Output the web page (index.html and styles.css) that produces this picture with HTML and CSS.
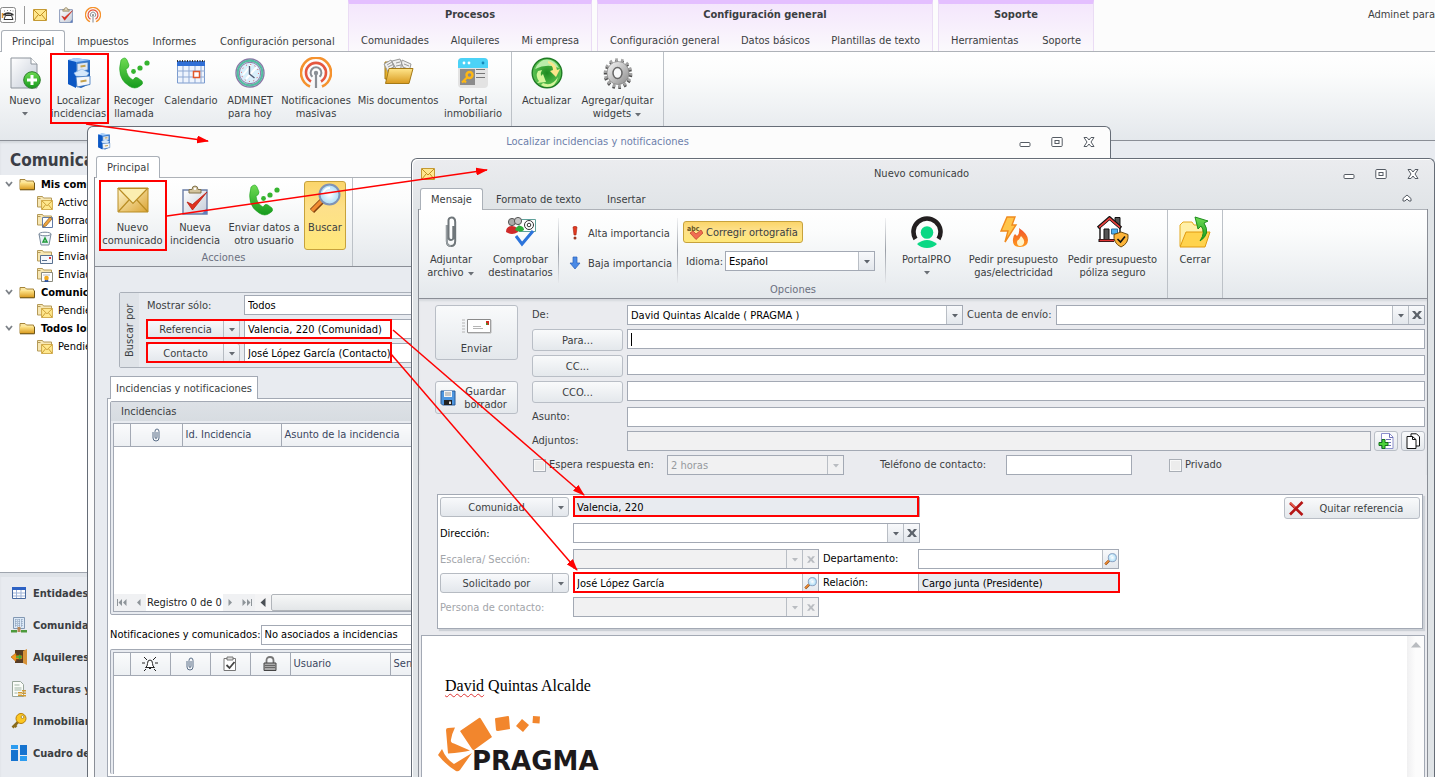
FILE: index.html
```html
<!DOCTYPE html>
<html lang="es">
<head>
<meta charset="utf-8">
<title>Adminet</title>
<link rel="stylesheet" href="styles.css">
</head>
<body>

<svg class="defs" aria-hidden="true">
  <defs>
    <linearGradient id="gold" x1="0" y1="0" x2="0" y2="1"><stop offset="0" stop-color="#ffe68c"/><stop offset="1" stop-color="#d99a1e"/></linearGradient>
    <linearGradient id="goldDiag" x1="0" y1="0" x2="1" y2="1"><stop offset="0" stop-color="#fff6cd"/><stop offset="1" stop-color="#dba536"/></linearGradient>
    <linearGradient id="blueDiag" x1="0" y1="0" x2="1" y2="1"><stop offset="0" stop-color="#5fa4f4"/><stop offset="1" stop-color="#0a4aa8"/></linearGradient>
    <linearGradient id="paper" x1="0" y1="0" x2="1" y2="1"><stop offset="0" stop-color="#ffffff"/><stop offset="1" stop-color="#c5ccd8"/></linearGradient>
    <linearGradient id="green" x1="0" y1="0" x2="0" y2="1"><stop offset="0" stop-color="#6edb52"/><stop offset="1" stop-color="#159a1d"/></linearGradient>
    <linearGradient id="steel" x1="0" y1="0" x2="1" y2="1"><stop offset="0" stop-color="#fafafa"/><stop offset="1" stop-color="#8a8a8a"/></linearGradient>
    <linearGradient id="flameGrad" x1="0" y1="0" x2="0" y2="1"><stop offset="0" stop-color="#f0522a"/><stop offset="1" stop-color="#ff9a1e"/></linearGradient>
    <radialGradient id="glass"><stop offset="0" stop-color="#ffffff"/><stop offset="1" stop-color="#a9dcf7"/></radialGradient>
    <radialGradient id="orb"><stop offset="0" stop-color="#1d8a1f"/><stop offset="1" stop-color="#5cc452"/></radialGradient>

    <symbol id="i-folder" viewBox="0 0 16 14">
      <path d="M1 2.500h5l1.500 1.500h7v8.500H1z" fill="#fbe6a0" stroke="#a5843a"/>
      <path d="M1 5.500h14v7H1z" fill="url(#gold)"/><path d="M1 12.800h14.500V5.500" fill="none" stroke="#6d5315"/>
    </symbol>
    <symbol id="i-minifolder" viewBox="0 0 16 15">
      <path d="M.500 1.500h5l1 1.500h8v9H.500z" fill="#f7e7b4" stroke="#b59a58"/>
      <path d="M.500 3.500h3" stroke="#b59a58"/>
    </symbol>
    <symbol id="i-mail" viewBox="0 0 32 26">
      <path d="M1 1h30v24H1z" fill="url(#goldDiag)" stroke="#b98d25"/>
      <path d="M1.500 24.500L12 13M30.500 24.500L20 13" fill="none" stroke="#b98d25" stroke-width="1.200"/>
      <path d="M1.500 1.500L16 16.500 30.500 1.500z" fill="#fbeeb0" stroke="#b98d25" stroke-width="1.200"/>
    </symbol>
    <symbol id="i-smallmail" viewBox="0 0 14 12">
      <path d="M.500.500h13v11H.500z" fill="#ffe88e" stroke="#c59a33"/>
      <path d="M1 1l6 6 6-6M1 11l4-5M13 11L9 6" fill="none" stroke="#c08f24"/>
    </symbol>
    <symbol id="i-cabinet" viewBox="0 0 26 32">
      <path d="M2 3l7-2 15 2v24l-9 4-13-4z" fill="url(#blueDiag)"/>
      <path d="M2 3l7-2 15 2-14 2z" fill="#a9cffb"/>
      <path d="M2 3l8 2v26l-8-4z" fill="#0c57c4"/>
      <path d="M11 6.500l11-1.500v8l-11 1.500z" fill="#dfe7f2" stroke="#3774bd" stroke-width=".800"/>
      <path d="M8 16l8-4 7 4-3 4-10-1z" fill="#d6e8fb" stroke="#8fb9ea" stroke-width=".600"/>
      <path d="M10 20l14-1v8.500L11 30z" fill="#f4f6fa" stroke="#3774bd" stroke-width=".800"/>
      <path d="M14.500 9.500l5-.700M14.500 24.500l6-1" stroke="#c4a24d" stroke-width="2"/>
    </symbol>
    <symbol id="i-clipboard" viewBox="0 0 26 30">
      <path d="M1 5h24v24H1z" fill="url(#paper)" stroke="#6a7da6" stroke-width="1.400"/>
      <path d="M20 29l5-6v6z" fill="#5f7fc0"/>
      <path d="M7 8V4.500h3q0-3.500 3-3.500t3 3.500h3V8z" fill="#d2c39d" stroke="#82734c"/>
      <circle cx="13" cy="3.800" r="1.200" fill="#fff"/>
      <path d="M5 17l5.500 8L25 7 10.500 19.500z" fill="#e0301e" stroke="#b81c10" stroke-width=".800"/>
    </symbol>
    <symbol id="i-phone" viewBox="0 0 32 32">
      <path d="M3 3q4-4 6 0l2 5q0 3-3 4 1 8 7 11 2-4 5-2l4 3q2 3-2 5-5 4-11 0Q-2 21 3 3z" fill="url(#green)" stroke="#21a524" stroke-width=".600"/>
      <g fill="#35b42f"><circle cx="15.500" cy="14.500" r="2.400"/><circle cx="22" cy="11" r="2.600"/><circle cx="29" cy="6" r="2.600"/></g>
    </symbol>
    <symbol id="i-antenna" viewBox="0 0 32 32">
      <g fill="none" stroke-width="2.600">
        <path d="M10 29.500A15 15 0 1 1 22 29.500" stroke="#f5922e"/>
        <path d="M11 24.500A10 10 0 1 1 21 24.500" stroke="#e5573f"/>
        <path d="M12.500 19.800A5.400 5.400 0 1 1 19.500 19.800" stroke="#8a8f95" stroke-width="2"/>
        <path d="M16 16v15" stroke="#8a8f95" stroke-width="2.200"/>
      </g>
      <circle cx="16" cy="16" r="2.200" fill="#8a8f95"/>
    </symbol>
    <symbol id="i-lens" viewBox="0 0 32 32">
      <path d="M3 28l10-10" stroke="#84420f" stroke-width="6"/>
      <path d="M3 27.500l10-10" stroke="#f08c32" stroke-width="3.600"/>
      <circle cx="20.500" cy="11.500" r="10" fill="url(#glass)" stroke="#7f93b5" stroke-width="2"/>
      <path d="M14 10q2-5 7-5" fill="none" stroke="#fff" stroke-width="2"/>
    </symbol>
    <symbol id="i-clip" viewBox="0 0 12 32">
      <path d="M1.800 9v16q0 5 4.200 5t4.200-5V6q0-4.500-3.600-4.500T3.500 6v15q0 3 2.500 3t2.300-3V10" fill="none" stroke="#6f767a" stroke-width="2"/>
      <path d="M1.800 9v16q0 5 4.200 5" fill="none" stroke="#c4cccf" stroke-width=".700"/>
    </symbol>
    <symbol id="i-tinyclip" viewBox="0 0 8 14">
      <path d="M1 4v6q0 3 3 3t3-3V3.500Q7 1 5 1T3 3.500V9q0 1.500 1 1.500T5 9V4" fill="none" stroke="#5b6f88"/>
    </symbol>
    <symbol id="i-min" viewBox="0 0 12 12"><rect x="1" y="6.500" width="10" height="4" rx="1" fill="#fff" stroke="#555b63"/></symbol>
    <symbol id="i-max" viewBox="0 0 12 12"><rect x=".800" y="1.500" width="10.400" height="9" rx="1" fill="#fff" stroke="#555b63"/><rect x="4" y="4.500" width="4" height="3" fill="none" stroke="#555b63"/></symbol>
    <symbol id="i-close" viewBox="0 0 12 12"><path d="M1 1.500h3l2 2.500 2-2.500h3L8 6l3 4.500H8L6 8l-2 2.500H1L4 6z" fill="#fff" stroke="#555b63"/></symbol>
    <symbol id="i-down" viewBox="0 0 8 5"><path d="M1 1h6L4 4.500z" fill="currentColor"/></symbol>
    <symbol id="i-x" viewBox="0 0 10 8"><path d="M0 0h3l2 2.500L7 0h3L6.700 4 10 8H7L5 5.500 3 8H0l3.300-4z" fill="currentColor"/></symbol>
    <symbol id="i-chev" viewBox="0 0 8 6"><path d="M1 1l3 3.500L7 1" fill="none" stroke="#7d8288" stroke-width="1.800"/></symbol>
  </defs>
</svg>

<main class="app">
  <header class="app-head">
    <div class="head-left">
      <div class="quick">
        <svg width="16" height="16" viewBox="0 0 16 16"><rect x=".500" y=".500" width="15" height="15" rx="2" fill="#fdfdfd" stroke="#888"/><path d="M3 8.500V7q5-3.500 10.500 0v1.500h-2.500V7.500H6v1z" fill="#333"/><path d="M5.500 8.500h6l1.500 4H4z" fill="#fff" stroke="#333"/><path d="M4 4h1M7 3.500h1M10 3.500h1M12.500 4h1" stroke="#888"/><path d="M2.500 6v5" stroke="#e5962c" stroke-width="1.500"/></svg>
        <i class="quick-sep"></i>
        <svg width="14" height="12"><use href="#i-smallmail"/></svg>
        <svg width="14" height="16"><use href="#i-clipboard"/></svg>
        <svg width="16" height="16"><use href="#i-antenna"/></svg>
      </div>
      <nav class="tabs tabs-app">
        <button class="tab on">Principal</button><button class="tab">Impuestos</button><button class="tab">Informes</button><button class="tab">Configuración personal</button>
      </nav>
    </div>
    <section class="context c-proc"><h2>Procesos</h2><nav class="tabs"><button class="tab">Comunidades</button><button class="tab">Alquileres</button><button class="tab">Mi empresa</button></nav></section>
    <section class="context c-conf"><h2>Configuración general</h2><nav class="tabs"><button class="tab">Configuración general</button><button class="tab">Datos básicos</button><button class="tab">Plantillas de texto</button></nav></section>
    <section class="context c-sop"><h2>Soporte</h2><nav class="tabs"><button class="tab">Herramientas</button><button class="tab">Soporte</button></nav></section>
    <span class="app-name">Adminet para</span>
  </header>

  <div class="ribbon ribbon-app">
    <div class="group app-a">
      <button class="big"><svg width="32" height="32" viewBox="0 0 32 32"><path d="M2 1h20l6 6v24H2z" fill="url(#paper)" stroke="#8d949c"/><path d="M22 1v6h6" fill="#fff" stroke="#8d949c"/><circle cx="23" cy="23" r="8.300" fill="url(#green)" stroke="#2b7d2a"/><path d="M23 18v10M18 23h10" stroke="#fff" stroke-width="3"/></svg><span>Nuevo</span><svg class="drop" width="8" height="5"><use href="#i-down"/></svg></button>
      <button class="big"><svg width="26" height="32"><use href="#i-cabinet"/></svg><span>Localizar<br>incidencias</span></button>
      <button class="big"><svg width="32" height="32"><use href="#i-phone"/></svg><span>Recoger<br>llamada</span></button>
      <button class="big"><svg width="32" height="32" viewBox="0 0 32 32"><path d="M2.500 5h27v21h-27z" fill="#eef4fd" stroke="#7a9bce"/><path d="M2 4h28v5H2z" fill="#2f6fd6"/><path d="M2 4h28" stroke="#333" stroke-width="2" stroke-dasharray="1 1.500"/><path d="M2 14h28M2 20h28M8 9v17M14 9v17M20 9v17M26 9v17" stroke="#8fa9d3"/><rect x="18.500" y="14.500" width="6" height="6" fill="#fff" stroke="#e2572b" stroke-width="1.500"/></svg><span>Calendario</span></button>
      <button class="big"><svg width="32" height="32" viewBox="0 0 32 32"><circle cx="16" cy="16" r="14" fill="#d9f0fb" stroke="#8c77a6" stroke-width="1.400"/><circle cx="16" cy="16" r="12.300" fill="none" stroke="#54bca0" stroke-width="2.200"/><circle cx="16" cy="16" r="10.700" fill="none" stroke="#8c77a6"/><path d="M9 18l8-10M12 22l11-12" stroke="#fff" stroke-width="2"/><circle cx="16" cy="16" r="8.500" fill="none" stroke="#df4652" stroke-dasharray="1 3.450"/><path d="M15.500 9v8l5 4" fill="none" stroke="#4d5870" stroke-width="1.400"/></svg><span>ADMINET<br>para hoy</span></button>
      <button class="big"><svg width="32" height="32"><use href="#i-antenna"/></svg><span>Notificaciones<br>masivas</span></button>
      <button class="big"><svg width="32" height="32" viewBox="0 0 32 32"><path d="M3 5h6l2 2v15H3z" fill="#e8b52c" stroke="#a57a17"/><path d="M2 7l7-4 7 12-8 4zM10 4l8-2 5 13-9 3zM20 3l9 4-3 12-8-2z" fill="#efefef" stroke="#999"/><path d="M5 8l5-3M6 10l6-3M8 12l5-3M14 6l4-1M14 9l5-1M22 7l5 2M21 10l5 2" stroke="#999"/><path d="M7 11.500h24l-4 15H3.500z" fill="url(#gold)" stroke="#a57a17"/></svg><span>Mis documentos</span></button>
      <button class="big"><svg width="32" height="32" viewBox="0 0 32 32"><rect x="1" y="1" width="30" height="30" rx="4" fill="#e3e3e3"/><path d="M1 11V5q0-4 4-4h22q4 0 4 4v6z" fill="#4bd2f7"/><circle cx="7" cy="6" r="1.400" fill="#fff"/><circle cx="12" cy="6" r="1.400" fill="#fff"/><circle cx="26" cy="6" r="1.400" fill="#1689b8"/><path d="M3 12h15v16H3z" fill="#8b8b8b"/><circle cx="12.500" cy="18" r="3" fill="none" stroke="#fdb714" stroke-width="2.400"/><path d="M10.500 20L5 25.500M7 23.500l2 2" stroke="#fdb714" stroke-width="2.200"/><path d="M19 12.500h9M19 16.500h9M19 20.500h9" stroke="#777"/></svg><span>Portal<br>inmobiliario</span></button>
    </div>
    <div class="group app-b">
      <button class="big"><svg width="32" height="32" viewBox="0 0 32 32"><circle cx="16" cy="16" r="14.800" fill="url(#orb)" stroke="#1f7a25" stroke-width="1.400"/><path d="M4 12Q8 2.500 16 2.500T28 11Q16 6 4 12z" fill="#b9ecaa"/><path d="M7 14q-3 5 1 10l-2 2 9-1-3-8-2 2q-1-3 1-6z" fill="#d4f59a"/><path d="M17 4q8 2 9 9l3-1-4 8-6-6 3-1q0-5-5-7z" fill="#fbe58a"/><path d="M12 26q9 4 15-6-2 10-11 10-3 0-6-2z" fill="#d4f59a"/></svg><span>Actualizar</span></button>
      <button class="big"><svg width="32" height="32" viewBox="0 0 32 32"><ellipse cx="16" cy="17.500" rx="12.500" ry="13" fill="none" stroke="#4f4f4f" stroke-width="3.500" stroke-dasharray="2.500 3.200"/><ellipse cx="16" cy="16" rx="12.500" ry="13" fill="none" stroke="#a3a3a3" stroke-width="3.500" stroke-dasharray="2.500 3.200"/><ellipse cx="16" cy="16" rx="11" ry="11.500" fill="url(#steel)" stroke="#777" stroke-width=".600"/><ellipse cx="15.500" cy="16" rx="4.500" ry="5.500" fill="#f8f9fa" stroke="#666" stroke-width="1.500"/></svg><span>Agregar/quitar<br>widgets <svg width="8" height="5"><use href="#i-down"/></svg></span></button>
    </div>
  </div>

  <aside class="side">
    <h1>Comunicados</h1>
    <ul class="tree">
      <li class="top"><svg width="8" height="6"><use href="#i-chev"/></svg><svg width="16" height="14"><use href="#i-folder"/></svg>Mis comunicados</li>
      <li><svg width="16" height="15"><use href="#i-minifolder"/><use href="#i-smallmail" x="4" y="5" width="12" height="10"/></svg>Activos</li>
      <li><svg width="16" height="15"><use href="#i-minifolder"/><path d="M5.500 4.500h10v10h-10z" fill="#fff" stroke="#607aa8"/><path d="M6 14l1-3 6-7 2 2-6 7z" fill="#f0a43a" stroke="#7c5b2f" stroke-width=".700"/></svg>Borradores</li>
      <li><svg width="16" height="15" viewBox="0 0 16 15"><path d="M2 3h12l-2 11H4z" fill="#eaf2f8" stroke="#76879a"/><ellipse cx="8" cy="3" rx="6" ry="1.800" fill="#fff" stroke="#76879a"/><path d="M8 7l2 4H6z" fill="none" stroke="#1f9b3a" stroke-width="1.500"/></svg>Eliminados</li>
      <li><svg width="16" height="15"><use href="#i-minifolder"/><path d="M3.500 6.500h12v8h-12z" fill="#f3f7fd" stroke="#58708f"/><path d="M5 11.500h5" stroke="#58708f"/><path d="M12 8h2v2h-2z" fill="#d33"/></svg>Enviados</li>
      <li><svg width="16" height="15"><use href="#i-minifolder"/><path d="M4.500 5.500h11v9h-11z" fill="#fff" stroke="#8a8a7d"/><path d="M6 8h7" stroke="#bbb"/><path d="M8 12l-.500 3h4l-.500-3" fill="#2e55a5"/><circle cx="9.500" cy="11" r="2.300" fill="#f0a91f"/></svg>Enviados certificados</li>
      <li class="top"><svg width="8" height="6"><use href="#i-chev"/></svg><svg width="16" height="14"><use href="#i-folder"/></svg>Comunicados web</li>
      <li><svg width="16" height="15"><use href="#i-minifolder"/><use href="#i-smallmail" x="4" y="5" width="12" height="10"/></svg>Pendientes</li>
      <li class="top"><svg width="8" height="6"><use href="#i-chev"/></svg><svg width="16" height="14"><use href="#i-folder"/></svg>Todos los comunicados</li>
      <li><svg width="16" height="15"><use href="#i-minifolder"/><use href="#i-smallmail" x="4" y="5" width="12" height="10"/></svg>Pendientes</li>
    </ul>
    <nav class="modules">
      <button><svg width="16" height="16" viewBox="0 0 16 16"><path d="M1.500 2.500h13v11h-13z" fill="#fff" stroke="#47699f"/><path d="M1 2h14v3H1z" fill="#2d62c4"/><path d="M2 8h12M2 11h12M5.500 5v8M10 5v8" stroke="#9db3d8"/></svg>Entidades</button>
      <button><svg width="16" height="16" viewBox="0 0 16 16"><path d="M2.500.500h11v11h-11z" fill="#dce9f7" stroke="#8298b3"/><path d="M4 3h8M4 5h8M4 7h8M4 9h8M5 2v8M8 2v8M11 2v8" stroke="#8298b3" stroke-dasharray="1 1"/><path d="M6.500 10h3v5h-3z" fill="#b9885a"/><path d="M0 13h6v2.500H0zM10 13h6v2.500h-6z" fill="#4d9a3c"/></svg>Comunidades</button>
      <button><svg width="16" height="16" viewBox="0 0 16 16"><path d="M4 1h11v13H4z" fill="#553c26"/><path d="M12 2l4-2v16l-4-2z" fill="#d7933b"/><path d="M0 8l5-4v2.500h6v3.500H5v2.500z" fill="#f49a22" stroke="#a45c0d" stroke-width=".600"/><path d="M5 8h5M8 6l2 2-2 2" fill="none" stroke="#36a938" stroke-width="1.500"/></svg>Alquileres</button>
      <button><svg width="16" height="16" viewBox="0 0 16 16"><path d="M1.500.500h8l3 3v12h-11z" fill="#fafcf9" stroke="#98a69b"/><path d="M3.500 4h5M3.500 7h7M3.500 9h7M3.500 12h3" stroke="#9fb4a4"/><path d="M7 11h4v1.500H7zM7 13.500h4V15H7zM11 9h4v1.500h-4zM11 11.500h4V13h-4zM11 14h4v1.500h-4z" fill="#d19a33"/></svg>Facturas y gastos</button>
      <button><svg width="16" height="16" viewBox="0 0 16 16"><path d="M8 8l-6.500 6.500M3.500 12l2 2" stroke="#8a6c1d" stroke-width="2.600"/><circle cx="10" cy="5.500" r="5" fill="#fcc722" stroke="#b98008"/><circle cx="11.500" cy="4" r="1.400" fill="#fff" stroke="#8a6c1d" stroke-width=".700"/></svg>Inmobiliaria</button>
      <button><svg width="16" height="16" viewBox="0 0 16 16"><path d="M0 0h7v4H0zM9 11h7v5H9z" fill="#2c9cf0"/><path d="M0 5h7v11H0zM9 0h7v10H9z" fill="#1673cf"/></svg>Cuadro de mando</button>
    </nav>
  </aside>
</main>

<section class="win win-find">
  <header class="bar">
    <svg class="bar-icon" width="14" height="17"><use href="#i-cabinet"/></svg>
    <h2>Localizar incidencias y notificaciones</h2>
    <div class="sys"><button aria-label="Minimizar"><svg width="12" height="12"><use href="#i-min"/></svg></button><button aria-label="Maximizar"><svg width="12" height="12"><use href="#i-max"/></svg></button><button aria-label="Cerrar ventana"><svg width="12" height="12"><use href="#i-close"/></svg></button></div>
  </header>
  <nav class="tabs"><button class="tab on">Principal</button></nav>
  <div class="client">
    <div class="ribbon ribbon-find">
      <div class="group captioned">
        <div class="find-a">
          <button class="big"><svg width="32" height="26"><use href="#i-mail"/></svg><span>Nuevo<br>comunicado</span></button>
          <button class="big"><svg width="28" height="30"><use href="#i-clipboard"/></svg><span>Nueva<br>incidencia</span></button>
          <button class="big"><svg width="32" height="32"><use href="#i-phone"/></svg><span>Enviar datos a<br>otro usuario</span></button>
          <button class="big pressed"><svg width="32" height="32"><use href="#i-lens"/></svg><span>Buscar</span></button>
        </div>
        <p>Acciones</p>
      </div>
    </div>
    <div class="find-body">
      <fieldset class="search">
        <legend class="vert">Buscar por</legend>
        <div class="search-rows">
          <label for="f-show">Mostrar sólo:</label><input id="f-show" class="box" value="Todos">
          <div class="split"><button>Referencia</button><button aria-label="Elegir referencia"><svg width="8" height="5"><use href="#i-down"/></svg></button></div><input class="box" aria-label="Referencia" value="Valencia, 220 (Comunidad)">
          <div class="split"><button>Contacto</button><button aria-label="Elegir contacto"><svg width="8" height="5"><use href="#i-down"/></svg></button></div><input class="box" aria-label="Contacto" value="José López García (Contacto)">
        </div>
      </fieldset>
      <button class="page-tab">Incidencias y notificaciones</button>
      <div class="page">
        <section class="panel">
          <h3>Incidencias</h3>
          <div class="grid grid-inc">
            <table>
              <colgroup><col class="w16"><col class="w52"><col class="w99"><col></colgroup>
              <thead><tr><th></th><th class="mid"><svg width="8" height="14"><use href="#i-tinyclip"/></svg></th><th>Id. Incidencia</th><th>Asunto de la incidencia</th></tr></thead>
            </table>
            <div class="pager">
              <button aria-label="Primero"><svg width="10" height="7" viewBox="0 0 10 7"><path d="M.500 0v7" stroke="#8e9499"/><path d="M5 0v7L1.500 3.500zM9.500 0v7L6 3.500z" fill="#8e9499"/></svg></button>
              <button aria-label="Anterior"><svg width="5" height="7" viewBox="0 0 5 7"><path d="M4.500 0v7L1 3.500z" fill="#8e9499"/></svg></button>
              <span>Registro 0 de 0</span>
              <button aria-label="Siguiente"><svg width="5" height="7" viewBox="0 0 5 7"><path d="M.500 0v7L4 3.500z" fill="#8e9499"/></svg></button>
              <button aria-label="Último"><svg width="10" height="7" viewBox="0 0 10 7"><path d="M9.500 0v7" stroke="#8e9499"/><path d="M5 0v7l3.500-3.500zM.500 0v7L4 3.500z" fill="#8e9499"/></svg></button>
              <i class="scroll-left"><svg width="6" height="9" viewBox="0 0 6 9"><path d="M5.500 0v9L.500 4.500z" fill="#4a4f55"/></svg></i><i class="thumb"></i>
            </div>
          </div>
        </section>
        <div class="notif"><label for="f-notif">Notificaciones y comunicados:</label><input id="f-notif" class="box" value="No asociados a incidencias"></div>
        <section class="panel grow">
          <div class="grid">
            <table>
              <colgroup><col class="w16"><col class="w40"><col class="w40"><col class="w40"><col class="w40"><col class="w100"><col></colgroup>
              <thead><tr><th></th>
                <th class="mid"><svg width="16" height="16" viewBox="0 0 16 16"><path d="M3.500 11.500h9q-2-1-2-4 0-3.500-2.500-3.500T5.500 7.500q0 3-2 4z" fill="#fff" stroke="#222"/><path d="M7 12.500h2" stroke="#222"/><path d="M2 1l3 3M14 1l-3 3M0 7h3M13 7h3M2 15l2-2M14 15l-2-2" stroke="#222"/></svg></th>
                <th class="mid"><svg width="8" height="14"><use href="#i-tinyclip"/></svg></th>
                <th class="mid"><svg width="14" height="16" viewBox="0 0 14 16"><path d="M1 2.500h11.500v12H1z" fill="#fff" stroke="#777"/><path d="M4 1h6v3H4z" fill="#ddd" stroke="#777"/><path d="M3.500 9l3 3 5-6" fill="none" stroke="#444" stroke-width="1.800"/></svg></th>
                <th class="mid"><svg width="14" height="15" viewBox="0 0 14 15"><path d="M3.500 8V4.500q0-3.500 3.500-3.500t3.500 3.500V8" fill="none" stroke="#777" stroke-width="1.800"/><path d="M1 7h12v7.500H1z" fill="#aaa" stroke="#444"/><path d="M2 9.500h10M2 11.500h10" stroke="#666"/></svg></th>
                <th>Usuario</th><th>Sentido</th></tr></thead>
            </table>
          </div>
        </section>
      </div>
    </div>
  </div>
</section>

<section class="win win-new">
  <header class="bar">
    <svg class="bar-icon" width="14" height="12"><use href="#i-smallmail"/></svg>
    <h2>Nuevo comunicado</h2>
    <div class="sys"><button aria-label="Minimizar"><svg width="12" height="12"><use href="#i-min"/></svg></button><button aria-label="Maximizar"><svg width="12" height="12"><use href="#i-max"/></svg></button><button aria-label="Cerrar ventana"><svg width="12" height="12"><use href="#i-close"/></svg></button></div>
  </header>
  <nav class="tabs"><button class="tab on">Mensaje</button><button class="tab">Formato de texto</button><button class="tab">Insertar</button>
    <button class="fold" aria-label="Contraer cinta"><svg width="10" height="8" viewBox="0 0 10 8"><path d="M1 4.500L5 1l4 3.500v2.500H7L5 5 3 7H1z" fill="#fff" stroke="#555b63"/></svg></button></nav>
  <div class="client">
    <div class="ribbon ribbon-new">
      <div class="group captioned new-main">
        <div class="new-a">
          <button class="big"><svg width="14" height="32"><use href="#i-clip"/></svg><span>Adjuntar<br>archivo <svg width="8" height="5"><use href="#i-down"/></svg></span></button>
          <button class="big"><svg width="32" height="32" viewBox="0 0 32 32"><path d="M14 3.500h16.500v12H14z" fill="#fff" stroke="#5fa09a"/><circle cx="7" cy="6" r="3.600" fill="#a9a9a9" stroke="#555"/><circle cx="13" cy="5" r="3.600" fill="#c4c4c4" stroke="#555"/><path d="M1 16q0-6 6-6t6 6q-6 4-12 0z" fill="#cf2a2a"/><path d="M10 14q2-5 6-4 3 1 3 4-4 3-9 0z" fill="#2fae3a"/><circle cx="24" cy="9" r="4.500" fill="none" stroke="#333"/><circle cx="24" cy="9" r="1.800" fill="none" stroke="#333"/><path d="M11 20l6 8 11-13" fill="none" stroke="#2d74db" stroke-width="3"/></svg><span>Comprobar<br>destinatarios</span></button>
          <div class="stack">
            <button class="small"><svg width="12" height="14" viewBox="0 0 12 14"><path d="M4 1q2-1.500 4 0l-1 8H5z" fill="#e13a20" stroke="#a42411" stroke-width=".600"/><circle cx="6" cy="12" r="1.500" fill="#9a3a22"/></svg>Alta importancia</button>
            <button class="small"><svg width="12" height="14" viewBox="0 0 12 14"><path d="M4 1h4v6h3l-5 6-5-6h3z" fill="#4a8ae6" stroke="#2a5fb8" stroke-width=".700"/></svg>Baja importancia</button>
          </div>
          <div class="stack stack-lang">
            <button class="small pressed"><svg width="16" height="16" viewBox="0 0 16 16"><text x="0" y="7" class="abc">abc</text><path d="M3 9l3-2 3 3 5-4 2 3-7 6.500z" fill="#f06c52" stroke="#b93d28" stroke-width=".700"/></svg>Corregir ortografia</button>
            <div class="lang"><label for="f-lang">Idioma:</label><div class="combo"><select id="f-lang"><option>Español</option></select><span class="cell"><svg width="8" height="5"><use href="#i-down"/></svg></span></div></div>
          </div>
          <div class="stack stack-pro">
            <button class="big"><svg width="32" height="32" viewBox="0 0 32 32"><path d="M4.500 23A13.500 13.500 0 1 1 27.500 23" fill="none" stroke="#231f20" stroke-width="4.600"/><circle cx="16" cy="16.500" r="6.300" fill="#0ad884"/><path d="M6 28q10-8 20 0-4 4-10 4T6 28z" fill="#0ad884"/></svg><span>PortalPRO</span><svg class="drop" width="8" height="5"><use href="#i-down"/></svg></button>
          </div>
          <button class="big"><svg width="32" height="32" viewBox="0 0 32 32"><path d="M9 1h8l-3 8h4L7 26l3-11H3z" fill="#ffc54a" stroke="#f08a1e" stroke-width="1.400"/><path d="M21 12q9 6 9 12 0 7-8 7t-7-8q0-3 2-5l2 2q3-3 2-8z" fill="url(#flameGrad)"/><path d="M23 20q4 4 3 7-1 3-4 3t-3-4q0-2 2-2.500z" fill="#fff3c9"/></svg><span>Pedir presupuesto<br>gas/electricidad</span></button>
          <button class="big"><svg width="32" height="32" viewBox="0 0 32 32"><path d="M18 1.500h5v8h-5z" fill="#555" stroke="#111"/><path d="M3 11l9.500-8L23 12v12H3z" fill="#fff" stroke="#111" stroke-width="1.400"/><path d="M1 12L12.500 2 24 12" fill="none" stroke="#111" stroke-width="3.600"/><path d="M2 11.300L12.500 2.300l10.500 9" fill="none" stroke="#e8413d" stroke-width="1.700"/><path d="M7 13h5v11H7z" fill="#555" stroke="#111"/><path d="M14.500 13h6v5h-6z" fill="#4fb0ee" stroke="#2b6f9e"/><path d="M1.500 24.500H17" stroke="#111" stroke-width="3"/><path d="M2.500 24.500H17" stroke="#e03434" stroke-width="1.500"/><path d="M24 16l7 2.500q1 9-7 12.500-8-4-7-12.500z" fill="#fdb539" stroke="#6b4a10"/><path d="M20.500 23l3 3 4.500-5.500" fill="none" stroke="#111" stroke-width="1.600"/></svg><span>Pedir presupuesto<br>póliza seguro</span></button>
        </div>
        <p>Opciones</p>
      </div>
      <div class="group new-close">
        <button class="big"><svg width="32" height="32" viewBox="0 0 32 32"><path d="M1 30V9l3-3h9l2 3h9v21z" fill="#fff0a8" stroke="#e4a91c"/><path d="M1 31l6-15h24l-5 15z" fill="#ffd34d" stroke="#e09a10"/><path d="M21 25q6-9 1-15l-3 3-3-12 13 4-4 2q7 11-4 18z" fill="url(#green)" stroke="#1e8c1c"/></svg><span>Cerrar</span></button>
      </div>
    </div>

    <form class="compose">
      <div class="actions">
        <button type="button" class="push send"><svg width="30" height="16" viewBox="0 0 30 16"><path d="M5.500 1.500h23v13h-23z" fill="#fff" stroke="#8a8a8a"/><path d="M6 15h23V2" fill="none" stroke="#b5b5b5"/><path d="M0 2h3M0 5h3M0 8h3M0 11h3M0 14h3M11 8.500h8M11 10.500h10" stroke="#b5b5b5"/><path d="M24 3h3v4h-3z" fill="#d32b1e"/><path d="M24 5h1.500v2H24z" fill="#3c9a2e"/></svg>Enviar</button>
        <button type="button" class="push save"><svg width="16" height="16" viewBox="0 0 16 16"><path d="M1 1h14v14H2.500L1 13.500z" fill="#4d96e0" stroke="#2a5b97"/><path d="M4 1h8v6H4z" fill="#f5f5f5"/><path d="M5 3h6M5 5h6" stroke="#999"/><path d="M4 10h8v5H4z" fill="#222"/><path d="M9 11.500h2V14H9z" fill="#ddd"/></svg><span>Guardar<br>borrador</span></button>
      </div>
      <div class="fields">
        <label for="m-from">De:</label>
        <div class="line"><div class="combo from"><select id="m-from"><option>David Quintas Alcalde ( PRAGMA )</option></select><span class="cell"><svg width="8" height="5"><use href="#i-down"/></svg></span></div><label for="m-acc">Cuenta de envío:</label><div class="combo fill"><select id="m-acc"><option></option></select><span class="cell"><svg width="8" height="5"><use href="#i-down"/></svg></span><button type="button" class="cell" aria-label="Borrar cuenta"><svg width="10" height="8"><use href="#i-x"/></svg></button></div></div>
        <button type="button" class="push">Para...</button><div class="box caret"><input aria-label="Para"></div>
        <button type="button" class="push">CC...</button><input class="box" aria-label="CC">
        <button type="button" class="push">CCO...</button><input class="box" aria-label="CCO">
        <label for="m-sub">Asunto:</label><input id="m-sub" class="box">
        <label for="m-att">Adjuntos:</label>
        <div class="line line-att"><input id="m-att" class="box off fill" readonly><button type="button" class="push tool" aria-label="Añadir adjunto"><svg width="17" height="16" viewBox="0 0 17 16"><path d="M3.500.500h8l3.500 3.500v11.500H3.500z" fill="#fff" stroke="#8d90cc"/><path d="M11.500.500v4H15M8 6.500h5M9 9.500h4M10 12.500h3" fill="none" stroke="#6f72b8"/><path d="M4 6.500h3v3h3v3H7v3H4v-3H1v-3h3z" fill="#4bd23a" stroke="#12711a"/></svg></button><button type="button" class="push tool" aria-label="Copiar"><svg width="15" height="16" viewBox="0 0 15 16"><path d="M5 .800h5.500l3 3V13H5z" fill="#fff" stroke="#111"/><path d="M1 3.500h5.500L10 6.500v9H1z" fill="#fff" stroke="#111"/><path d="M6.500 3.500v3H10" fill="none" stroke="#111"/></svg></button></div>
        <div class="line wide"><label class="check"><input type="checkbox">Espera respuesta en:</label><div class="combo off hours"><select aria-label="Horas" disabled><option>2 horas</option></select><span class="cell"><svg width="8" height="5"><use href="#i-down"/></svg></span></div><label for="m-tel" class="tel">Teléfono de contacto:</label><input id="m-tel" class="box phone"><label class="check"><input type="checkbox">Privado</label></div>
      </div>
    </form>

    <section class="ref">
      <div class="split"><button>Comunidad</button><button aria-label="Elegir comunidad"><svg width="8" height="5"><use href="#i-down"/></svg></button></div>
      <div class="line"><input class="box gray span3" aria-label="Comunidad" value="Valencia, 220" readonly><button class="push remove"><svg width="15" height="15" viewBox="0 0 15 15"><path d="M1 2l12.500 12M13.500 1L1 13.500" stroke="#b51616" stroke-width="2.600"/><path d="M1 1.500l5 5" stroke="#e8604f" stroke-width="1.400"/></svg><span>Quitar referencia</span></button></div>
      <label for="r-dir">Dirección:</label>
      <div class="line"><div class="combo span3"><select id="r-dir"><option></option></select><span class="cell"><svg width="8" height="5"><use href="#i-down"/></svg></span><button class="cell" aria-label="Borrar dirección"><svg width="10" height="8"><use href="#i-x"/></svg></button></div></div>
      <label for="r-esc" class="dim">Escalera/ Sección:</label>
      <div class="line"><div class="combo off half"><select id="r-esc" disabled><option></option></select><span class="cell"><svg width="8" height="5"><use href="#i-down"/></svg></span><button class="cell" aria-label="Borrar escalera" disabled><svg width="8" height="7"><use href="#i-x"/></svg></button></div><label for="r-dep" class="mini">Departamento:</label><div class="combo dep"><input id="r-dep"><button class="cell" aria-label="Buscar departamento"><svg width="13" height="13"><use href="#i-lens"/></svg></button></div></div>
      <div class="split"><button>Solicitado por</button><button aria-label="Elegir solicitante"><svg width="8" height="5"><use href="#i-down"/></svg></button></div>
      <div class="line"><div class="combo half"><input aria-label="Solicitado por" value="José López García"><button class="cell" aria-label="Buscar persona"><svg width="13" height="13"><use href="#i-lens"/></svg></button></div><label for="r-rel" class="mini">Relación:</label><input id="r-rel" class="box gray dep" value="Cargo junta (Presidente)" readonly></div>
      <label for="r-per" class="dim">Persona de contacto:</label>
      <div class="line"><div class="combo off half"><select id="r-per" disabled><option></option></select><span class="cell"><svg width="8" height="5"><use href="#i-down"/></svg></span><button class="cell" aria-label="Borrar persona" disabled><svg width="8" height="7"><use href="#i-x"/></svg></button></div></div>
    </section>

    <article class="editor">
      <div class="paper">
        <p><span class="typo">David</span> Quintas Alcalde</p>
        <svg class="logo" width="164" height="60" viewBox="0 0 164 60">
          <g fill="#f2862d">
            <path d="M22 16L41 3q1-1 2 1l11 18-18 13q-1 .500-2-1z"/><path d="M57 4q0-1 1-1l12-2q1 0 1 1l1 12-12 2q-2 0-2-1z"/><path d="M78 11l6-7 7 6-6 7z"/><path d="M95 1l7 .500-.500 7-7-.500z"/>
            <path d="M8 15q0-2 2-2l7-.500q-3 6-4 12-1 3 3 4l16 7q-8 2-22 3z"/><path d="M4 34q4 10 12 15l18-11-12 17q-2 2-4 1Q8 50 0 40z"/>
          </g>
          <text x="34" y="55" class="logo-text">PRAGMA</text>
        </svg>
      </div>
      <i class="vscroll"><svg width="10" height="6" viewBox="0 0 10 6"><path d="M5 0l5 5.500H0z" fill="#b9bcc0"/></svg></i>
    </article>
  </div>
</section>

<svg class="notes" viewBox="0 0 1435 777" aria-hidden="true">
  <defs><marker id="tip" markerUnits="userSpaceOnUse" markerWidth="12" markerHeight="8" refX="11" refY="4" orient="auto"><path d="M0 0l12 4-12 4z" fill="red"/></marker></defs>
  <g fill="none" stroke="red" stroke-width="2">
    <rect x="51" y="54" width="57" height="69"/>
    <rect x="100" y="181" width="66" height="69"/>
    <rect x="147" y="320" width="244" height="18"/>
    <rect x="147" y="343" width="244" height="19"/>
    <rect x="574" y="497" width="344" height="19"/>
    <rect x="574" y="573" width="545" height="19"/>
  </g>
  <g stroke="red" stroke-width="1.500">
    <path d="M86 124L208 141" marker-end="url(#tip)"/><path d="M167 216L487 170" marker-end="url(#tip)"/><path d="M393 330L584 495" marker-end="url(#tip)"/><path d="M391 354L577 570" marker-end="url(#tip)"/>
  </g>
</svg>
</body>
</html>
```

FILE: styles.css
```css
* { box-sizing: border-box; }
html, body { height: 100%; }
body, button, input, select {
  font: 11px/13px "DejaVu Sans Condensed", "Noto Sans", sans-serif;
  color: #3b3e42;
}
body { margin: 0; overflow: hidden; background: #e8ebf0; position: relative; }
h1, h2, h3, p, ul, fieldset, legend { margin: 0; padding: 0; border: 0; }
button, input, select { margin: 0; padding: 0; border: 0; background: none; border-radius: 0; }
button { white-space: nowrap; }
input, select { color: #000; outline: 0; opacity: 1; }
select { appearance: none; }
svg { flex: none; }
label { white-space: nowrap; }
.defs { position: absolute; width: 0; height: 0; }

/* tabs and ribbons */
.tabs { display: flex; }
.tab { height: 21px; padding: 0 12px; border: 1px solid transparent; border-bottom: 0; }
.tab.on { background: #fff; border-color: #aab0b8; border-radius: 3px 3px 0 0; height: 22px; margin-bottom: -1px; position: relative; z-index: 1; }
.ribbon {
  display: flex;
  border-top: 1px solid #aeb2b8;
  border-bottom: 1px solid #8a8e96;
  background: linear-gradient(#fff, #fbfcfc 25%, #e4e8ec);
}
.group { border-right: 1px solid #bcc1c7; }
.big { display: flex; flex-direction: column; align-items: center; padding-top: 5px; min-width: 0; }
.big > span { margin-top: 5px; }
.big .drop, .big span svg { color: #6a6f75; }
.big .drop { margin-top: 4px; }
.big > svg[height="26"] { margin: 3px 0; }
.big > svg[height="30"] { margin: 1px 0; }
.pressed { background: linear-gradient(#fbd56a, #fde08a 40%, #ffe87a); border: 1px solid #c7a23c; border-radius: 3px; }

/* main window */
.app { height: 100%; display: flex; flex-direction: column; }
.app-head { display: flex; height: 51px; background: #fcfcfc; }
.head-left { width: 348px; display: flex; flex-direction: column; justify-content: space-between; }
.quick { display: flex; align-items: center; height: 30px; gap: 12px; }
.quick-sep { width: 1px; height: 18px; background: #9a9a9a; margin: 0 -4px; }
.tabs-app { padding-left: 1px; }
.tabs-app .tab { padding: 0 11px; }
.tabs-app .tab.on { padding: 0 10px; }
.context {
  border: 1px solid #eadcf4; border-top: 4px solid #e4bfff; border-bottom: 0; margin-right: 5px;
  background: linear-gradient(#f4e6fc, #fbf9fc);
  display: flex; flex-direction: column; justify-content: space-between;
}
.context h2 { text-align: center; font-size: 11px; padding-top: 4px; }
.context .tabs { justify-content: space-between; padding: 0 12px; }
.context .tab { padding: 0; border: 0; }
.c-proc { width: 244px; }
.c-conf { width: 336px; }
.c-sop { width: 156px; }
.app-name { margin-left: auto; padding-top: 8px; white-space: nowrap; }
.ribbon-app { height: 90px; }
.app-a { display: grid; grid-template-columns: 50px 57px 54px 60px 58px 74px 90px 60px; padding-right: 8px; }
.app-b { display: grid; grid-template-columns: 67px 75px; padding: 0 8px 0 1px; }

.side { width: 200px; flex: 1; min-height: 0; display: flex; flex-direction: column; background: #e8ebf0; box-shadow: inset 0 2px 2px #d4d8dd; }
.side h1 { font: bold 17px/20px "DejaVu Sans Condensed", "Noto Sans", sans-serif; padding: 9px 0 5px 10px; color: #3b3e46; }
.tree { flex: 1; list-style: none; background: #fff; padding-left: 5px; color: #000; }
.tree li { display: flex; align-items: center; height: 18px; gap: 5px; padding-left: 32px; white-space: nowrap; }
.tree .top { padding-left: 0; font-weight: bold; gap: 6px; }
.modules { display: flex; flex-direction: column; border-top: 4px solid #dfe3e8; outline: 1px solid #9fa5ae; padding-bottom: 8px; }
.modules button { display: flex; align-items: center; gap: 6px; height: 32px; padding-left: 11px; font-weight: bold; }

/* child windows */
.win { position: absolute; bottom: 0; border: 1px solid #666d77; border-bottom: 0; border-radius: 6px 6px 0 0; display: flex; flex-direction: column; overflow: hidden; }
.win-find { left: 87px; top: 126px; width: 1024px; background: #fcfcfc; }
.win-new { left: 411px; top: 158px; right: 0; background: linear-gradient(#ebecef, #e0e4e7 50px); box-shadow: inset 1px 1px #fff; }
.bar { display: flex; align-items: center; height: 29px; padding: 0 15px 0 9px; }
.bar h2 { flex: 1; text-align: center; font-size: 11px; font-weight: normal; }
.win-find .bar h2 { color: #6d7fab; }
.sys { display: flex; gap: 20px; }
.bar-icon { margin-right: 65px; }
.sys button, .fold { display: flex; }
.win .tabs { padding-left: 8px; }
.win .tab { padding: 0 10px; }
.win-new .tabs .tab + .tab { padding: 0 12px; }
.fold { margin: 6px 22px 0 auto; }
.client { flex: 1; min-height: 0; display: flex; flex-direction: column; margin: 0 6px; border-left: 1px solid #8a8e96; border-right: 1px solid #8a8e96; background: #eaebef; }
.captioned { display: flex; flex-direction: column; justify-content: space-between; }
.captioned p { text-align: center; color: #6b7080; padding-bottom: 2px; }
.ribbon-find { height: 90px; }
.find-a { display: grid; grid-template-columns: 67px 58px 80px 42px; padding: 3px 6px 0 4px; height: 73px; }
.find-a .big { height: 69px; padding-top: 3px; }
.find-a .pressed { padding-top: 1px; }
.find-a .pressed span { margin-top: 6px; }

/* find window */
.find-body { flex: 1; display: flex; flex-direction: column; align-items: flex-start; padding: 25px 0 0 12px; background: #e8ebf0; }
.search { display: flex; align-self: stretch; margin: 0 10px 8px 12px; border: 1px solid #aab0b9; border-radius: 2px; height: 76px; }
.vert { float: left; writing-mode: vertical-rl; transform: rotate(180deg); text-align: center; width: 19px; height: 74px; line-height: 19px; background: #dfe3e8; }
.search-rows { flex: 1; display: grid; grid-template-columns: 93px 1fr; grid-auto-rows: 20px; gap: 4px; padding: 2px 8px 0 8px; align-items: center; }
.box { height: 20px; border: 1px solid #a3a9b4; background: #fff; padding: 0 3px; min-width: 0; width: 100%; }
.split { display: flex; height: 20px; border: 1px solid #b6bbc2; border-radius: 3px; background: linear-gradient(#f8f9fb, #e3e7ec); }
.split button:first-child { flex: 1; }
.split button + button { width: 16px; border-left: 1px solid #b6bbc2; display: flex; align-items: center; justify-content: center; color: #666b72; }
.page-tab { margin-left: 3px; height: 23px; padding: 0 4px; min-width: 148px; background: #fff; border: 1px solid #a3a9b4; border-bottom: 0; position: relative; z-index: 1; }
.page { flex: 1; align-self: stretch; display: flex; flex-direction: column; margin-top: -1px; border: 1px solid #a3a9b4; background: #fff; padding: 2px; }
.panel { border: 1px solid #a3a9b4; border-radius: 2px; background: #e8ebf0; padding: 2px; }
.panel.grow { flex: 1; border-bottom: 0; padding-bottom: 0; display: flex; }
.panel.grow .grid { flex: 1; border-bottom: 0; }
.panel h3 { font-size: 11px; font-weight: normal; margin: -2px -2px 2px; padding: 0 10px; line-height: 19px; background: linear-gradient(#dde1e6, #d7dce1); }
.grid { border: 1px solid #a3a9b4; background: #fff; display: flex; flex-direction: column; justify-content: space-between; }
.grid-inc { height: 189px; }
table { border-collapse: collapse; table-layout: fixed; width: 100%; }
th { height: 22px; padding: 0 3px; text-align: left; font-weight: normal; border-right: 1px solid #a3a9b4; border-bottom: 1px solid #a3a9b4; background: linear-gradient(#fafbfc, #edf0f3); color: #3a4560; }
th.mid { text-align: center; line-height: 0; }
th svg { vertical-align: middle; }
.w16 { width: 16px; } .w40 { width: 40px; } .w52 { width: 52px; } .w99 { width: 99px; } .w100 { width: 100px; }
.pager { display: flex; height: 17px; color: #222; }
.pager button { width: 16px; background: #f0f1f3; display: flex; align-items: center; justify-content: center; }
.pager span { line-height: 17px; padding: 0 1px; white-space: nowrap; }
.scroll-left { width: 16px; display: flex; align-items: center; justify-content: center; background: #f4f4f5; }
.thumb { flex: 1; border: 1px solid #b1b5ba; border-radius: 2px; background: linear-gradient(#f6f7f7, #e3e6e8); }
.notif { display: flex; align-items: center; height: 34px; padding-top: 5px; color: #000; background: #fff; }
.notif .box { flex: 1; }

/* compose window ribbon */
.win-new .ribbon { flex: none; height: 90px; }
.win-new .big { padding-top: 6px; }
.new-main { flex: none; }
.new-a { display: grid; grid-template-columns: 64px 75px 119px 208px 82px 93px 105px; padding-right: 2px; height: 73px; }
.new-close { width: 55px; display: flex; justify-content: center; }
.stack { border-left: 1px solid #a9adb4; border-image: linear-gradient(#f4f5f6, #9a9fa7, #e9ebee) 1; margin-top: 8px; }
.stack .small { display: flex; align-items: center; gap: 7px; height: 30px; padding-left: 10px; }
.stack-lang { padding: 3px 0 0 5px; }
.stack-lang .small { height: 22px; padding: 0 4px 0 3px; gap: 3px; }
.abc { font: bold 7px "DejaVu Sans Condensed", sans-serif; fill: #6a5520; }
.lang { display: flex; align-items: center; gap: 2px; margin: 8px 10px 0 0; padding-left: 3px; }
.lang .combo { flex: 1; }
.win-new .stack-pro .big { width: 100%; padding-top: 0; margin-top: -2px; }

.combo { display: flex; height: 20px; border: 1px solid #a3a9b4; background: #fff; min-width: 0; }
.combo select, .combo input { flex: 1; min-width: 0; padding: 0 3px; }
.cell { display: flex; align-items: center; justify-content: center; width: 16px; flex: none; border-left: 1px solid #b9bec5; background: linear-gradient(#f8f9fb, #e3e7ec); color: #5d636b; }
.off { background: #f1f1f2; }
.off .cell { background: #f1f1f2; color: #b9bcc1; }
.off select { color: #96999e; }
.gray { background: #e8ebf0; }
.push { border: 1px solid #b9bec6; border-radius: 3px; background: linear-gradient(#f9fafb, #e4e8ec); display: flex; align-items: center; justify-content: center; }

/* compose form */
.compose { display: flex; gap: 14px; padding: 6px 2px 0 16px; box-shadow: inset 0 2px 2px #d6d9de; }
.actions { display: flex; flex-direction: column; gap: 21px; width: 83px; flex: none; }
.send { height: 55px; flex-direction: column; gap: 8px; padding-top: 8px; }
.save { height: 33px; gap: 8px; padding-right: 6px; }
.fields { flex: 1; min-width: 0; display: grid; grid-template-columns: 91px 1fr; column-gap: 4px; grid-template-rows: 24px 26px 26px 26px 24px 24px 20px; }
.fields > label { line-height: 20px; }
.fields > .push { height: 22px; }
.line { display: flex; align-items: flex-start; gap: 4px; line-height: 20px; min-width: 0; }
.line label { line-height: 20px; }
.line .fill { flex: 1; }
.from { flex: 0 1 336px; }
.line-att { gap: 3px; }
.tool { width: 24px; height: 20px; }
.caret { display: flex; align-items: center; }
.caret::before { content: ""; width: 1px; height: 13px; background: #000; }
.caret input { flex: 1; min-width: 0; }
.wide { grid-column: 1 / -1; }
.check { display: flex; align-items: center; gap: 3px; width: 131px; }
.check input { appearance: none; width: 13px; height: 13px; margin: 0 0 0 1px; border: 1px solid #a9aeb6; background: #ececec; box-shadow: inset 0 0 0 1px #f8f8f8; }
.hours { width: 177px; }
.tel { margin-left: 32px; width: 122px; }
.phone { width: 126px; margin-right: 32px; }

/* reference panel */
.ref {
  margin: 19px 4px 0 18px; padding: 2px 2px 11px 2px; border: 1px solid #a3a9b4; background: #fff; box-shadow: 2px 2px 1px #cdd1d7;
  display: grid; grid-template-columns: 129px 1fr; column-gap: 4px; grid-template-rows: 26px 26px 24px 24px 20px; color: #000; line-height: 20px;
}
.ref > label { line-height: 22px; }
.ref .dim { color: #a2a5aa; }
.span3 { width: 347px; }
.half { width: 246px; }
.mini { width: 91px; }
.dep { width: 201px; }
.remove { margin-left: auto; width: 136px; height: 22px; justify-content: flex-start; padding-left: 4px; }
.remove span { flex: 1; }

.editor { flex: 1; min-height: 0; display: flex; margin: 6px 2px 0; border: 1px solid #a3a9b4; border-bottom: 0; background: #fff; }
.paper { flex: 1; padding: 41px 16px 0 23px; color: #000; }
.paper p { font: 16px/18px "Liberation Serif", serif; }
.typo { text-decoration: underline wavy #d33 1px; text-decoration-skip-ink: none; text-underline-offset: 2px; }
.logo { display: block; margin: 20px 0 0 -7px; }
.logo-text { font: bold 26px "DejaVu Sans", sans-serif; fill: #1d1a1b; }
.vscroll { width: 17px; padding-top: 6px; text-align: center; line-height: 0; background: linear-gradient(90deg, #f0f0f1, #fcfcfc 50%); }

/* callouts drawn over the windows */
.notes { position: absolute; left: 0; top: 0; width: 1435px; height: 777px; pointer-events: none; }
```
